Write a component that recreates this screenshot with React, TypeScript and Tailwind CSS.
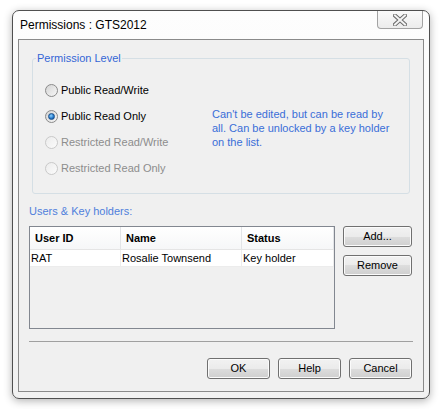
import React from 'react';

const ui = { fontFamily: '"Liberation Sans", Arial, sans-serif' };

const levels = [
  { label: 'Public Read/Write', checked: false, disabled: false },
  { label: 'Public Read Only', checked: true, disabled: false },
  { label: 'Restricted Read/Write', checked: false, disabled: true },
  { label: 'Restricted Read Only', checked: false, disabled: true },
];

const columns = [
  { title: 'User ID', width: 'w-[91px]' },
  { title: 'Name', width: 'w-[121px]' },
  { title: 'Status', width: 'w-[92px]' },
];

const rows = [['RAT', 'Rosalie Townsend', 'Key holder']];

function Radio({ checked, disabled }: { checked: boolean; disabled: boolean }) {
  return (
    <span
      className={`flex h-[13px] w-[13px] shrink-0 items-center justify-center rounded-full border ${
        disabled
          ? 'border-[#c9c9c9] bg-[linear-gradient(135deg,#ececec,#fbfbfb)]'
          : 'border-[#8a8a8a] bg-[linear-gradient(135deg,#d4d4d4,#f7f7f7)]'
      }`}
    >
      {checked && (
        <span className="h-[7px] w-[7px] rounded-full border border-[#1b4f88] bg-[radial-gradient(circle_at_40%_35%,#8fd3ff,#1f74c8_60%,#174a8a)]" />
      )}
    </span>
  );
}

function Button({ children, className = '' }: { children: React.ReactNode; className?: string }) {
  return (
    <button
      className={`flex h-[21px] items-center justify-center rounded-[3px] border border-[#707070] bg-[linear-gradient(to_bottom,#f2f2f2_0%,#ebebeb_50%,#dddddd_50%,#cfcfcf_100%)] text-[11px] text-black shadow-[inset_0_0_0_1px_#fbfbfb] ${className}`}
    >
      {children}
    </button>
  );
}

export default function App() {
  return (
    <div className="h-[409px] w-[439px] bg-white pl-[12px] pt-[10px]" style={ui}>
      <div className="flex h-[389px] w-[418px] flex-col rounded-[7px] border border-[#4f4f4f] bg-[linear-gradient(to_bottom,#fdfdfd,#f1f1f1)] shadow-[0_2px_8px_rgba(0,0,0,0.3)]">
        {/* title bar */}
        <div className="flex h-[28px] items-start justify-between pl-[7px] pr-[6px]">
          <span className="text-[12px] leading-[28px] text-black">Permissions : GTS2012</span>
          <button className="flex h-[18px] w-[46px] items-center justify-center rounded-b-[4px] border border-t-0 border-[#a3a3a3] bg-[linear-gradient(to_bottom,#fafafa,#ececec)]">
            <svg width="14" height="12" viewBox="0 0 14 12">
              <path d="M2 1.5 L12 10.5 M12 1.5 L2 10.5" stroke="#6b6b6b" strokeWidth="4" strokeLinecap="square" />
              <path d="M2 1.5 L12 10.5 M12 1.5 L2 10.5" stroke="#f4f4f4" strokeWidth="2" strokeLinecap="square" />
            </svg>
          </button>
        </div>

        {/* client area */}
        <div className="mx-[5px] mb-[6px] flex flex-1 flex-col border border-[#8a8a8a] bg-[#f0f0f0] px-[10px] text-[11px] text-black">
          <fieldset className="mx-[3px] mt-[11px] rounded-[3px] border border-[#d5dfe5] p-0">
            <legend className="ml-[3px] px-[1px] leading-[15px] text-[#3466d6]">Permission Level</legend>
            <div className="flex pb-[12px] pl-[12px] pt-[11px]">
              <div className="flex w-[167px] flex-col">
                {levels.map((lvl) => (
                  <label key={lvl.label} className="flex h-[26px] items-center gap-[3px]">
                    <Radio checked={lvl.checked} disabled={lvl.disabled} />
                    <span className={lvl.disabled ? 'text-[#8d8d8d]' : 'text-black'}>{lvl.label}</span>
                  </label>
                ))}
              </div>
              <p className="mt-[30px] leading-[14px] text-[#3a6ed8]">
                Can't be edited, but can be read by
                <br />
                all. Can be unlocked by a key holder
                <br />
                on the list.
              </p>
            </div>
          </fieldset>

          <div className="mt-[10px] leading-[14px] text-[#4f7fdc]">Users &amp; Key holders:</div>

          <div className="mt-[8px] flex gap-[8px]">
            <div className="h-[103px] w-[306px] border border-[#828790] bg-[#f0f0f0]">
              <div className="flex h-[23px] border-b border-[#e5e5e5] bg-[linear-gradient(to_bottom,#ffffff,#f6f7f8)]">
                {columns.map((col) => (
                  <div
                    key={col.title}
                    className={`${col.width} flex items-center border-r border-[#e2e4e7] pl-[5px] font-bold`}
                  >
                    {col.title}
                  </div>
                ))}
              </div>
              {rows.map((row) => (
                <div key={row[0]} className="flex h-[17px] border-b border-[#ececec] bg-white">
                  {row.map((cell, i) => (
                    <div key={i} className={`${columns[i].width} flex items-center border-r border-[#ededed] pl-[1px]`}>
                      {cell}
                    </div>
                  ))}
                </div>
              ))}
            </div>
            <div className="flex w-[69px] flex-col gap-[8px]">
              <Button>Add...</Button>
              <Button>Remove</Button>
            </div>
          </div>

          <div className="mt-[12px] border-t border-[#a0a0a0]" />

          <div className="mt-[16px] flex justify-end gap-[8px] pr-[1px]">
            <Button className="w-[63px]">OK</Button>
            <Button className="w-[63px]">Help</Button>
            <Button className="w-[63px]">Cancel</Button>
          </div>
        </div>
      </div>
    </div>
  );
}
